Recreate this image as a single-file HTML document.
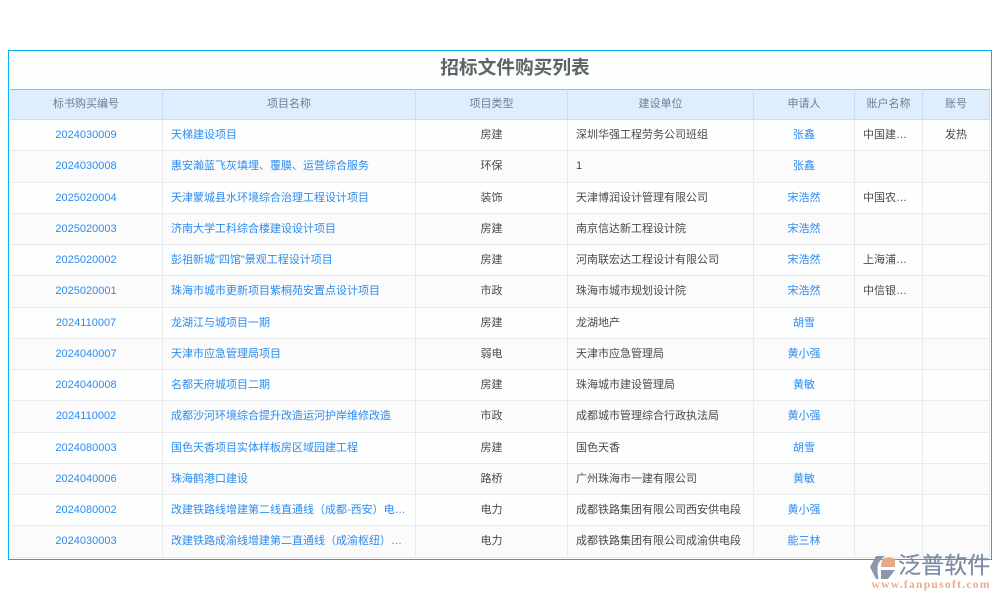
<!DOCTYPE html>
<html lang="zh">
<head>
<meta charset="utf-8">
<style>
html,body{margin:0;padding:0;width:1000px;height:600px;overflow:hidden;background:#fff;font-family:"Liberation Sans","Noto Sans CJK SC",sans-serif}
.frame{position:absolute;left:8px;top:50px;width:982px;height:507.5px;border:1px solid #00b4f0;background:#fdfefe;filter:blur(.25px)}
.title{position:absolute;left:15px;top:0;width:100%;height:38px;line-height:33.5px;text-align:center;font-size:18.7px;font-weight:bold;color:#5f6368}
.grid{position:absolute;left:1px;top:38px;width:980px;display:grid;grid-template-columns:153px 253px 152px 186px 101px 68px 67px;grid-template-rows:31px repeat(14,31.25px)}
.grid>div{box-sizing:border-box;font-size:11px;line-height:30px;white-space:nowrap;overflow:hidden;text-overflow:ellipsis;border-right:1px solid #e8eaec;border-bottom:1px solid #e8eaec;padding:0 8px;color:#4a4a4a;background:#fdfefe}
.grid>div.h{background:#deeefc;color:#6a7f94;text-align:center;border-top:1px solid #7cc3f3;border-right:1px solid #c4dff5;border-bottom:1px solid #c4dff5;line-height:28px}
.grid>div.alt{background:#fbfbfb}
.c{text-align:center}
.grid>div.l{color:#2d8cf0}
.lt{position:absolute;left:898px;top:552px;font-size:23px;line-height:27px;letter-spacing:.1px;color:#7b8ba4;white-space:nowrap;-webkit-text-stroke:.2px #7b8ba4}
.lu{position:absolute;left:871.5px;top:579px;font-family:"Liberation Serif",serif;font-size:11.5px;line-height:13px;font-weight:bold;letter-spacing:1.3px;color:#e9ab8f;white-space:nowrap}
</style>
</head>
<body>
<div class="frame">
<div class="title">招标文件购买列表</div>
<div class="grid">
<div class="h">标书购买编号</div><div class="h">项目名称</div><div class="h">项目类型</div><div class="h">建设单位</div><div class="h">申请人</div><div class="h">账户名称</div><div class="h">账号</div>

<div class="c l">2024030009</div><div class="l">天梯建设项目</div><div class="c">房建</div><div>深圳华强工程劳务公司班组</div><div class="c l">张鑫</div><div>中国建设银行</div><div class="c">发热</div>

<div class="c l alt">2024030008</div><div class="l alt">惠安瀚蓝飞灰填埋、覆膜、运营综合服务</div><div class="c alt">环保</div><div class="alt">1</div><div class="c l alt">张鑫</div><div class="alt"></div><div class="alt"></div>

<div class="c l">2025020004</div><div class="l">天津蒙城县水环境综合治理工程设计项目</div><div class="c">装饰</div><div>天津博润设计管理有限公司</div><div class="c l">宋浩然</div><div>中国农业银行</div><div></div>

<div class="c l alt">2025020003</div><div class="l alt">济南大学工科综合楼建设设计项目</div><div class="c alt">房建</div><div class="alt">南京信达新工程设计院</div><div class="c l alt">宋浩然</div><div class="alt"></div><div class="alt"></div>

<div class="c l">2025020002</div><div class="l">彭祖新城"四馆"景观工程设计项目</div><div class="c">房建</div><div>河南联宏达工程设计有限公司</div><div class="c l">宋浩然</div><div>上海浦东银行</div><div></div>

<div class="c l alt">2025020001</div><div class="l alt">珠海市城市更新项目紫桐苑安置点设计项目</div><div class="c alt">市政</div><div class="alt">珠海市城市规划设计院</div><div class="c l alt">宋浩然</div><div class="alt">中信银行支行</div><div class="alt"></div>

<div class="c l">2024110007</div><div class="l">龙湖江与城项目一期</div><div class="c">房建</div><div>龙湖地产</div><div class="c l">胡雪</div><div></div><div></div>

<div class="c l alt">2024040007</div><div class="l alt">天津市应急管理局项目</div><div class="c alt">弱电</div><div class="alt">天津市应急管理局</div><div class="c l alt">黄小强</div><div class="alt"></div><div class="alt"></div>

<div class="c l">2024040008</div><div class="l">名都天府城项目二期</div><div class="c">房建</div><div>珠海城市建设管理局</div><div class="c l">黄敏</div><div></div><div></div>

<div class="c l alt">2024110002</div><div class="l alt">成都沙河环境综合提升改造运河护岸维修改造</div><div class="c alt">市政</div><div class="alt">成都城市管理综合行政执法局</div><div class="c l alt">黄小强</div><div class="alt"></div><div class="alt"></div>

<div class="c l">2024080003</div><div class="l">国色天香项目实体样板房区域园建工程</div><div class="c">房建</div><div>国色天香</div><div class="c l">胡雪</div><div></div><div></div>

<div class="c l alt">2024040006</div><div class="l alt">珠海鹤港口建设</div><div class="c alt">路桥</div><div class="alt">广州珠海市一建有限公司</div><div class="c l alt">黄敏</div><div class="alt"></div><div class="alt"></div>

<div class="c l">2024080002</div><div class="l">改建铁路线增建第二线直通线（成都-西安）电力工程</div><div class="c">电力</div><div>成都铁路集团有限公司西安供电段</div><div class="c l">黄小强</div><div></div><div></div>

<div class="c l alt">2024030003</div><div class="l alt">改建铁路成渝线增建第二直通线（成渝枢纽）电力工程</div><div class="c alt">电力</div><div class="alt">成都铁路集团有限公司成渝供电段</div><div class="c l alt">能三林</div><div class="alt"></div><div class="alt"></div>
</div>
</div>
<svg style="position:absolute;left:868px;top:553px" width="30" height="28" viewBox="0 0 30 28">
<path d="M8 3H17C13 6 10 10 9.500 14C9.300 18 10 23 10.500 26H8L2 14Z" fill="#8a98af"/>
<path d="M15 6C18 4 23 4 27 6V14H13C13 11 13.500 8 15 6Z" fill="#e6a888"/>
<path d="M13 17H27L20 26H13Z" fill="#8a98af"/>
</svg>
<div class="lt">泛普软件</div>
<div class="lu">www.fanpusoft.com</div>
</body>
</html>
